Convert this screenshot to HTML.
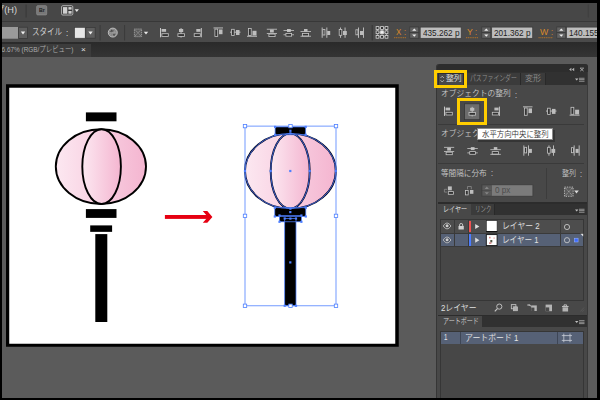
<!DOCTYPE html>
<html lang="ja">
<head>
<meta charset="utf-8">
<title>Illustrator - 整列パネル</title>
<style>
*{margin:0;padding:0;box-sizing:border-box;}
html,body{width:600px;height:400px;overflow:hidden;background:#000;}
body{position:relative;font-family:"Liberation Sans","Noto Sans CJK JP",sans-serif;font-size:9px;color:#d0d0d0;line-height:1;}
.a{position:absolute;}
.t{position:absolute;white-space:pre;line-height:1;transform-origin:0 0;font-weight:350;}
#menubar{left:2px;top:2.7px;width:595px;height:18.3px;background:#474747;}
#menuline{left:2px;top:20.7px;width:595px;height:1px;background:#383838;}
#ctrlbar{left:2px;top:21.7px;width:595px;height:20.3px;background:#4a4a4a;}
#tabband{left:2px;top:42px;width:595px;height:15px;background:linear-gradient(#2a2a2a,#343434);}
#doctab{left:2px;top:44.2px;width:88.5px;height:12.8px;background:#3c3c3c;}
#canvas{left:2px;top:57px;width:595px;height:341px;background:#5b5b5b;}
#artboard{left:6px;top:84.3px;width:392.6px;height:262.2px;background:#fff;border:3.3px solid #000;}
svg{position:absolute;left:0;top:0;overflow:visible;}
.vsep{position:absolute;width:1px;background:#383838;}
.fld{position:absolute;background:#c2c2c2;border:1px solid #3a3a3a;border-radius:1px;}
.spin{position:absolute;background:#606060;border:1px solid #3a3a3a;}
.dd{position:absolute;background:#606060;border:1px solid #3a3a3a;}
</style>
</head>
<body>
<div class="a" id="menubar"></div>
<div class="a" id="menuline"></div>
<div class="a" id="ctrlbar"></div>
<div class="a" id="tabband"></div>
<div class="a" id="doctab"></div>
<div class="a" id="canvas"></div>

<svg id="icons" width="600" height="400" viewBox="0 0 600 400" shape-rendering="auto">
<defs>
<g id="alignL"><rect x="0" y="0" width="1" height="9.3" fill="#c6c6c6"/><rect x="1.6" y="1" width="4.5" height="2.8" fill="#bdbdbd"/><rect x="1.9" y="5.7" width="6.4" height="2.7" fill="#333" stroke="#c6c6c6" stroke-width="0.8"/></g>
<g id="alignHC"><rect x="3.6" y="0" width="0.9" height="9.6" fill="#c6c6c6"/><rect x="2" y="1" width="4.2" height="3" fill="#bdbdbd"/><rect x="0.9" y="5.7" width="6.5" height="2.7" fill="#333" stroke="#c6c6c6" stroke-width="0.8"/></g>
<g id="alignR"><rect x="7.3" y="0" width="1" height="9.3" fill="#c6c6c6"/><rect x="2.8" y="1" width="4.2" height="2.8" fill="#bdbdbd"/><rect x="0.7" y="5.7" width="6.1" height="2.7" fill="#333" stroke="#c6c6c6" stroke-width="0.8"/></g>
<g id="alignT"><rect x="0" y="0" width="9.5" height="0.9" fill="#c6c6c6"/><rect x="1.4" y="1.6" width="2.8" height="7.3" fill="#333" stroke="#c6c6c6" stroke-width="0.8"/><rect x="5.5" y="2" width="3.5" height="4.7" fill="#bdbdbd"/></g>
<g id="alignVC"><rect x="0" y="4" width="10.5" height="0.9" fill="#c6c6c6"/><rect x="1.6" y="1.6" width="2.6" height="6.2" fill="#333" stroke="#c6c6c6" stroke-width="0.8"/><rect x="6" y="2.3" width="3.5" height="5" fill="#bdbdbd"/></g>
<g id="alignB"><rect x="0" y="8.3" width="10" height="0.9" fill="#c6c6c6"/><rect x="1.4" y="0.9" width="2.8" height="7" fill="#333" stroke="#c6c6c6" stroke-width="0.8"/><rect x="5.5" y="3.3" width="4" height="4.7" fill="#bdbdbd"/></g>
<g id="distT"><rect x="0" y="0.3" width="10.2" height="0.8" fill="#c6c6c6"/><rect x="3.2" y="1.1" width="3.8" height="2.9" fill="#bdbdbd"/><rect x="0" y="4.6" width="10.2" height="0.8" fill="#c6c6c6"/><rect x="2.1" y="5.6" width="6.2" height="2.5" fill="#333" stroke="#c6c6c6" stroke-width="0.8"/></g>
<g id="distVC"><rect x="3.5" y="0.5" width="3.8" height="3" fill="#bdbdbd"/><rect x="0" y="1.6" width="10.5" height="0.8" fill="#c6c6c6"/><rect x="0" y="5.9" width="10.5" height="0.8" fill="#c6c6c6"/><rect x="2.4" y="5" width="5.7" height="2.7" fill="#333" stroke="#c6c6c6" stroke-width="0.8"/></g>
<g id="distB"><rect x="3.5" y="0.5" width="3.5" height="2.6" fill="#bdbdbd"/><rect x="0" y="2.7" width="10.5" height="0.8" fill="#c6c6c6"/><rect x="1.9" y="5" width="6.2" height="2.5" fill="#333" stroke="#c6c6c6" stroke-width="0.8"/><rect x="0" y="7.3" width="10.5" height="0.8" fill="#c6c6c6"/></g>
<g id="distL"><rect x="0" y="0" width="0.9" height="10.3" fill="#c6c6c6"/><rect x="1.2" y="1.9" width="2" height="5.6" fill="#333" stroke="#c6c6c6" stroke-width="0.8"/><rect x="4.7" y="0" width="0.9" height="10.3" fill="#c6c6c6"/><rect x="5.5" y="3.5" width="3" height="4" fill="#bdbdbd"/></g>
<g id="distHC"><rect x="2.1" y="0" width="0.9" height="10.3" fill="#c6c6c6"/><rect x="1.2" y="1.9" width="2.6" height="5.9" fill="#333" stroke="#c6c6c6" stroke-width="0.8"/><rect x="6.6" y="0" width="0.9" height="10.3" fill="#c6c6c6"/><rect x="5" y="3.5" width="3.8" height="4" fill="#bdbdbd"/></g>
<g id="distR"><rect x="0.9" y="2.3" width="2" height="5" fill="#333" stroke="#c6c6c6" stroke-width="0.8"/><rect x="3.1" y="0" width="0.9" height="10.3" fill="#c6c6c6"/><rect x="5" y="3.5" width="3" height="4" fill="#bdbdbd"/><rect x="8.1" y="0" width="0.9" height="10.3" fill="#c6c6c6"/></g>
<g id="alignTo"><rect x="0.4" y="0.4" width="7.2" height="7.7" fill="#5c5c5c" stroke="#b8b8b8" stroke-width="0.8" stroke-dasharray="1.1 0.9"/><path d="M1.2 1.2l5.6 6.1M6.8 1.2l-5.6 6.1" stroke="#a8a8a8" stroke-width="0.8" stroke-dasharray="1 0.8" fill="none"/></g>
<g id="pmenu"><path d="M0 0.6h3.4l-1.7 2z" fill="#c0c0c0"/><rect x="4" y="0" width="5.5" height="0.8" fill="#a8a8a8"/><rect x="4" y="1.5" width="5.5" height="0.8" fill="#a8a8a8"/><rect x="4" y="3" width="5.5" height="0.8" fill="#a8a8a8"/></g>
</defs>

<!-- menu bar icons -->
<rect x="25.6" y="4.5" width="1" height="13" fill="#383838"/>
<rect x="36.7" y="5.7" width="10" height="9.2" rx="1" fill="#787878" stroke="#8c8c8c" stroke-width="0.8"/>
<rect x="61.6" y="5.7" width="11.2" height="9.3" rx="1.2" fill="#3a3a3a" stroke="#c0c0c0" stroke-width="0.9"/>
<rect x="63" y="7.1" width="4.3" height="6.6" fill="#cfcfcf"/>
<rect x="68.4" y="7.1" width="3.2" height="2.5" fill="#cfcfcf"/>
<rect x="68.4" y="11" width="3.2" height="2.7" fill="#cfcfcf"/>
<path d="M74.7 9.2h4.2l-2.1 2.8z" fill="#e8e8e8"/>
<rect x="587.8" y="4.5" width="0.8" height="13" fill="#3c3c3c"/>

<!-- control bar: left dropdown -->
<rect x="2" y="27" width="16.3" height="11.7" fill="#9a9a9a"/>
<rect x="18.6" y="27.2" width="8.8" height="11.3" fill="#5e5e5e" stroke="#3a3a3a" stroke-width="0.8"/>
<path d="M20.8 31.6h4.4l-2.2 2.8z" fill="#f0f0f0"/>
<!-- style swatch -->
<rect x="74.6" y="27.4" width="10.6" height="10.8" fill="#e6e6e6" stroke="#3a3a3a" stroke-width="0.6"/>
<rect x="85.8" y="27.4" width="9.4" height="10.8" fill="#5e5e5e" stroke="#3a3a3a" stroke-width="0.8"/>
<path d="M88.3 31.6h4.4l-2.2 2.8z" fill="#f0f0f0"/>
<rect x="99.6" y="25" width="1" height="15.5" fill="#3a3a3a"/>
<!-- globe -->
<circle cx="112.8" cy="32.6" r="4.5" fill="#888" stroke="#cfcfcf" stroke-width="0.8"/>
<path d="M109.6 31.8l1.6-2 2.4 0.1-0.4 1.8-1.8 0.9zM112.6 34.3l2.4-0.8 0.6 1.2-1.8 1.4z" fill="#4c4c4c"/><path d="M108.5 32.6h8.6M112.8 28.2v8.8M109.6 29.6q3.2 3 0 6M116 29.6q-3.2 3 0 6" stroke="#b0b0b0" stroke-width="0.35" fill="none"/>
<rect x="124.1" y="25" width="1" height="15.5" fill="#3a3a3a"/>
<use href="#alignTo" x="134" y="28.6"/>
<path d="M143.8 31.8h4.4l-2.2 2.6z" fill="#e8e8e8"/>
<!-- align icons -->
<use href="#alignL" x="160" y="28"/>
<use href="#alignHC" x="177" y="28"/>
<use href="#alignR" x="193.5" y="28"/>
<use href="#alignT" x="213.5" y="27.5"/>
<use href="#alignVC" x="230" y="27.7"/>
<use href="#alignB" x="247" y="27.5"/>
<use href="#distT" x="266.8" y="28.5"/>
<use href="#distVC" x="283.5" y="28.5"/>
<use href="#distB" x="300.5" y="28.5"/>
<use href="#distL" x="321.7" y="27.5"/>
<use href="#distHC" x="338" y="27.5"/>
<use href="#distR" x="355" y="27.5"/>
<rect x="371.7" y="25" width="1" height="15.5" fill="#353535"/>
<!-- reference point icon -->
<g fill="#333" stroke="#d8d8d8" stroke-width="0.8">
<path d="M377.5 28v8.8M382 28v8.8M386.5 28v8.8M377.5 28h9M377.5 32.3h9M377.5 36.8h9" fill="none" stroke="#bdbdbd" stroke-width="0.7"/>
<rect x="376.1" y="26.6" width="2.8" height="2.8"/><rect x="380.6" y="26.6" width="2.8" height="2.8"/><rect x="385.1" y="26.6" width="2.8" height="2.8"/>
<rect x="376.1" y="30.9" width="2.8" height="2.8"/><rect x="380.6" y="30.9" width="2.8" height="2.8" fill="#f0f0f0"/><rect x="385.1" y="30.9" width="2.8" height="2.8"/>
<rect x="376.1" y="35.4" width="2.8" height="2.8"/><rect x="380.6" y="35.4" width="2.8" height="2.8"/><rect x="385.1" y="35.4" width="2.8" height="2.8"/>
</g>
<!-- X field -->
<g>
<path d="M394 37.7h12" stroke="#c87a1e" stroke-width="0.8" stroke-dasharray="1.2 0.6"/>
<rect x="409.8" y="27" width="9" height="5.4" fill="#626262" stroke="#383838" stroke-width="0.7"/>
<rect x="409.8" y="32.8" width="9" height="5.4" fill="#626262" stroke="#383838" stroke-width="0.7"/>
<path d="M412.2 30.8h4.2l-2.1-2.4zM412.2 34.4h4.2l-2.1 2.4z" fill="#f0f0f0"/>
<rect x="420.2" y="27.1" width="41" height="11.2" fill="#bdbdbd" stroke="#3a3a3a" stroke-width="0.7"/>
</g>
<!-- Y field -->
<g>
<path d="M466 37.7h12" stroke="#c87a1e" stroke-width="0.8" stroke-dasharray="1.2 0.6"/>
<rect x="481.8" y="27" width="9" height="5.4" fill="#626262" stroke="#383838" stroke-width="0.7"/>
<rect x="481.8" y="32.8" width="9" height="5.4" fill="#626262" stroke="#383838" stroke-width="0.7"/>
<path d="M484.2 30.8h4.2l-2.1-2.4zM484.2 34.4h4.2l-2.1 2.4z" fill="#f0f0f0"/>
<rect x="491.7" y="27.1" width="41" height="11.2" fill="#bdbdbd" stroke="#3a3a3a" stroke-width="0.7"/>
</g>
<!-- W field -->
<g>
<path d="M538.5 37.7h14.5" stroke="#c87a1e" stroke-width="0.8" stroke-dasharray="1.2 0.6"/>
<rect x="556.8" y="27" width="9" height="5.4" fill="#626262" stroke="#383838" stroke-width="0.7"/>
<rect x="556.8" y="32.8" width="9" height="5.4" fill="#626262" stroke="#383838" stroke-width="0.7"/>
<path d="M559.2 30.8h4.2l-2.1-2.4zM559.2 34.4h4.2l-2.1 2.4z" fill="#f0f0f0"/>
<rect x="566.5" y="27.1" width="34" height="11.2" fill="#bdbdbd" stroke="#3a3a3a" stroke-width="0.7"/>
</g>
</svg>
<span class="t" style="left:-5.00px;top:5.35px;font-size:9.6px;color:#d6d6d6;transform:scaleX(0.9598);">プ(H)</span>
<span class="t" style="left:39.20px;top:7.87px;font-size:5.6px;color:#1c1c1c;transform:scaleX(0.9327);font-weight:bold">Br</span>
<span class="t" style="left:32.20px;top:27.88px;font-size:9.0px;color:#dedede;transform:scaleX(0.8330);">スタイル</span>
<span class="t" style="left:65.80px;top:29.33px;font-size:9.0px;color:#dedede;transform:scaleX(0.8745);">:</span>
<span class="t" style="left:395.50px;top:28.46px;font-size:8.8px;color:#d9892a;transform:scaleX(0.9021);">X</span>
<span class="t" style="left:404.00px;top:28.46px;font-size:8.8px;color:#d9892a;transform:scaleX(0.8153);">:</span>
<span class="t" style="left:422.50px;top:28.87px;font-size:8.7px;color:#1e1e1e;transform:scaleX(0.9442);">435.262 p</span>
<span class="t" style="left:467.00px;top:28.46px;font-size:8.8px;color:#d9892a;transform:scaleX(0.9872);">Y</span>
<span class="t" style="left:475.20px;top:28.46px;font-size:8.8px;color:#d9892a;transform:scaleX(0.8153);">:</span>
<span class="t" style="left:494.00px;top:28.87px;font-size:8.7px;color:#1e1e1e;transform:scaleX(0.9442);">201.362 p</span>
<span class="t" style="left:539.50px;top:28.46px;font-size:8.8px;color:#d9892a;transform:scaleX(0.9985);">W</span>
<span class="t" style="left:550.50px;top:28.46px;font-size:8.8px;color:#d9892a;transform:scaleX(0.8153);">:</span>
<span class="t" style="left:569.00px;top:28.87px;font-size:8.7px;color:#1e1e1e;transform:scaleX(0.9442);">140.155 p</span>
<span class="t" style="left:-2.50px;top:46.21px;font-size:7.6px;color:#acacac;transform:scaleX(0.8439);">66.67% (RGB/プレビュー)</span>
<span class="t" style="left:80.60px;top:46.16px;font-size:8.0px;color:#e0e0e0;transform:scaleX(1.0274);">×</span>


<svg id="art" width="600" height="400" viewBox="0 0 600 400">
<defs>
<linearGradient id="gp" x1="0" y1="0" x2="1" y2="0">
<stop offset="0" stop-color="#fce8f1"/><stop offset="1" stop-color="#f4b5d0"/>
</linearGradient>
</defs>
<rect x="6" y="84.25" width="392.75" height="262.5" fill="#000"/><rect x="9.25" y="87.75" width="386" height="256" fill="#fff"/>
<!-- left lantern -->
<g>
<rect x="85.9" y="112.4" width="30.6" height="8.9" fill="#000"/>
<ellipse cx="100.9" cy="166.6" rx="45.1" ry="37.4" fill="url(#gp)" stroke="#000" stroke-width="1.9"/>
<ellipse cx="101.6" cy="166.6" rx="19.3" ry="37.4" fill="url(#gp)" stroke="#000" stroke-width="1.9"/>
<rect x="85.9" y="209.1" width="30.6" height="8.8" fill="#000"/>
<rect x="90.2" y="225.4" width="21.9" height="6.45" fill="#000"/>
<rect x="95.3" y="234.1" width="12" height="87.9" fill="#000"/>
</g>
<!-- arrow -->
<g fill="#e60012">
<rect x="164.9" y="215" width="44" height="3.9"/>
<path d="M202.8 211.1H207.3L212.4 216.95L207.3 222.8H202.8L207.9 216.95Z"/>
</g>
<!-- right lantern -->
<g>
<ellipse cx="290.4" cy="171" rx="45.4" ry="37.65" fill="url(#gp)" stroke="#00001c" stroke-width="1.9"/>
<ellipse cx="290.2" cy="171" rx="19.5" ry="37.65" fill="url(#gp)" stroke="#00001c" stroke-width="1.9"/>
<rect x="275.1" y="126.9" width="30.6" height="7.9" fill="#000"/>
<rect x="274.8" y="207.7" width="31" height="8.8" fill="#000"/>
<rect x="279.5" y="215.5" width="21.9" height="6.3" fill="#000"/>
<rect x="284.7" y="218.5" width="11.3" height="87.3" fill="#000"/>
</g>
<!-- selection overlay -->
<g fill="none" stroke="#4f80ff" stroke-width="0.75">
<rect x="245" y="126.1" width="91" height="179.7" stroke-width="0.8"/>
<rect x="275.1" y="126.9" width="30.6" height="7.9"/>
<ellipse cx="290.4" cy="171" rx="45.4" ry="37.65"/>
<ellipse cx="290.2" cy="171" rx="19.5" ry="37.65"/>
<rect x="274.8" y="207.7" width="31" height="8.8"/>
<rect x="279.5" y="215.5" width="21.9" height="6.3"/>
<rect x="284.7" y="218.5" width="11.3" height="87.3"/>
</g>
<g fill="#4f80ff">
<rect x="243.9" y="169.9" width="2.2" height="2.2"/><rect x="334.7" y="169.9" width="2.2" height="2.2"/><rect x="289.3" y="132.3" width="2.2" height="2.2"/><rect x="289.3" y="207.5" width="2.2" height="2.2"/><rect x="269.6" y="169.9" width="2.2" height="2.2"/><rect x="308.6" y="169.9" width="2.2" height="2.2"/><rect x="289.2" y="169.9" width="2.2" height="2.2"/><rect x="274.0" y="125.8" width="2.2" height="2.2"/><rect x="304.6" y="125.8" width="2.2" height="2.2"/><rect x="274.0" y="133.7" width="2.2" height="2.2"/><rect x="304.6" y="133.7" width="2.2" height="2.2"/><rect x="289.3" y="129.7" width="2.2" height="2.2"/><rect x="273.7" y="206.6" width="2.2" height="2.2"/><rect x="304.7" y="206.6" width="2.2" height="2.2"/><rect x="273.7" y="215.4" width="2.2" height="2.2"/><rect x="304.7" y="215.4" width="2.2" height="2.2"/><rect x="289.2" y="211.0" width="2.2" height="2.2"/><rect x="278.4" y="214.4" width="2.2" height="2.2"/><rect x="300.3" y="214.4" width="2.2" height="2.2"/><rect x="278.4" y="220.7" width="2.2" height="2.2"/><rect x="300.3" y="220.7" width="2.2" height="2.2"/><rect x="289.3" y="217.5" width="2.2" height="2.2"/><rect x="283.6" y="217.4" width="2.2" height="2.2"/><rect x="294.9" y="217.4" width="2.2" height="2.2"/><rect x="283.6" y="304.7" width="2.2" height="2.2"/><rect x="294.9" y="304.7" width="2.2" height="2.2"/><rect x="289.2" y="261.3" width="2.2" height="2.2"/></g>
<g fill="#fff" stroke="#4f80ff" stroke-width="0.8">
<rect x="243.3" y="124.4" width="3.4" height="3.4"/><rect x="288.8" y="124.4" width="3.4" height="3.4"/><rect x="334.3" y="124.4" width="3.4" height="3.4"/><rect x="243.3" y="214.2" width="3.4" height="3.4"/><rect x="334.3" y="214.2" width="3.4" height="3.4"/><rect x="243.3" y="304.1" width="3.4" height="3.4"/><rect x="288.8" y="304.1" width="3.4" height="3.4"/><rect x="334.3" y="304.1" width="3.4" height="3.4"/></g>
</svg>


<div class="a" style="left:436px;top:64px;width:152px;height:334px;background:#484848;border-left:1px solid #363636;border-right:1px solid #3a3a3a;border-radius:3px 3px 0 0;"></div>
<!-- header -->
<div class="a" style="left:437px;top:64.3px;width:150.5px;height:8px;background:#2d2d2d;border-radius:3px 3px 0 0;"></div>
<!-- align tab row -->
<div class="a" style="left:437.5px;top:72.3px;width:149.5px;height:12.5px;background:#313131;"></div>
<div class="a" style="left:437.5px;top:72.8px;width:26.5px;height:12.2px;background:#484848;border:1px solid #2a2a34;border-bottom:none;"></div>
<div class="a" style="left:464.6px;top:73px;width:56px;height:11.5px;background:#3b3b3b;border-right:1px solid #292929;"></div>
<div class="a" style="left:521.2px;top:73px;width:24.4px;height:11.5px;background:#3b3b3b;border-right:1px solid #292929;"></div>
<!-- section separators -->
<div class="a" style="left:438px;top:123.7px;width:145.5px;height:1px;background:#3a3a3a;"></div>
<div class="a" style="left:438px;top:162.9px;width:145.5px;height:1px;background:#3a3a3a;"></div>
<div class="a" style="left:545.7px;top:167.5px;width:1px;height:31px;background:#3c3c3c;"></div>
<!-- layers section -->
<div class="a" style="left:437.5px;top:202.2px;width:149.5px;height:1.4px;background:#2c2c2c;"></div>
<div class="a" style="left:437.5px;top:203.6px;width:149.5px;height:11.2px;background:#313131;"></div>
<div class="a" style="left:437.5px;top:203.6px;width:33px;height:11.6px;background:#484848;"></div>
<div class="a" style="left:470.8px;top:203.8px;width:24px;height:10.8px;background:#3b3b3b;border-right:1px solid #292929;"></div>
<div class="a" style="left:440.3px;top:219.2px;width:143.6px;height:82.2px;background:#474747;border:1px solid #363636;"></div>
<div class="a" style="left:441.2px;top:219.8px;width:142px;height:13.2px;background:#4d4d4d;"></div>
<div class="a" style="left:441.2px;top:233.6px;width:142px;height:12.4px;background:#566176;"></div>
<div class="a" style="left:441.2px;top:233px;width:142px;height:0.7px;background:#3a3a3a;"></div>
<div class="a" style="left:441.2px;top:246px;width:142px;height:0.7px;background:#3a3a3a;"></div>
<div class="a" style="left:454.2px;top:219.8px;width:0.8px;height:26.2px;background:#3a3a3a;"></div>
<div class="a" style="left:467.8px;top:219.8px;width:0.8px;height:26.2px;background:#3a3a3a;"></div>
<div class="a" style="left:560px;top:219.8px;width:0.8px;height:26.2px;background:#3a3a3a;"></div>
<div class="a" style="left:468.9px;top:220.7px;width:2.4px;height:11.6px;background:#f05252;"></div>
<div class="a" style="left:468.9px;top:234.3px;width:2.4px;height:11.5px;background:#4c7dff;"></div>
<!-- artboard section -->
<div class="a" style="left:437.5px;top:314.6px;width:149.5px;height:1.4px;background:#2c2c2c;"></div>
<div class="a" style="left:437.5px;top:316px;width:149.5px;height:11px;background:#313131;"></div>
<div class="a" style="left:437.5px;top:316px;width:44.3px;height:11.4px;background:#484848;"></div>
<div class="a" style="left:440.3px;top:331px;width:143.6px;height:70px;background:#474747;border:1px solid #363636;"></div>
<div class="a" style="left:441.2px;top:332px;width:142px;height:11.8px;background:#566176;"></div>
<div class="a" style="left:459.8px;top:332px;width:0.8px;height:11.8px;background:#3e4656;"></div>
<div class="a" style="left:557px;top:332px;width:0.8px;height:11.8px;background:#3e4656;"></div>

<svg id="picons" width="600" height="400" viewBox="0 0 600 400">
<!-- header icons -->
<path d="M571.4 67.8l-2.3 1.7 2.3 1.7zM574.2 67.8l-2.3 1.7 2.3 1.7z" fill="#b4b4b4"/>
<path d="M580.2 68.3l3.4 2.8M583.6 68.3l-3.4 2.8" stroke="#b4b4b4" stroke-width="0.8" fill="none"/>
<rect x="580" y="67.7" width="3.8" height="0.7" fill="#b4b4b4"/>
<!-- tab updown icon -->
<path d="M440.5 78l1.7-1.8 1.7 1.8M440.5 80.2l1.7 1.8 1.7-1.8" fill="none" stroke="#c4c4c4" stroke-width="0.8"/>
<use href="#pmenu" x="575" y="77.8"/>
<use href="#pmenu" x="575" y="208.8"/>
<use href="#pmenu" x="575" y="320.3"/>
<!-- selected button -->
<rect x="464.6" y="103.8" width="15.2" height="15.9" fill="#6c6c6c" stroke="#333" stroke-width="0.7"/>
<!-- row 1 -->
<use href="#alignL" x="444" y="106.6"/>
<use href="#alignHC" x="468.1" y="106.8"/>
<use href="#alignR" x="491.6" y="106.6"/>
<use href="#alignT" x="523" y="106.4"/>
<use href="#alignVC" x="546" y="106.6"/>
<use href="#alignB" x="569.6" y="106.4"/>
<!-- row 2 -->
<use href="#distT" x="444" y="146.6"/>
<use href="#distVC" x="467.3" y="146.6"/>
<use href="#distB" x="490.3" y="146.6"/>
<use href="#distL" x="523.4" y="145.4"/>
<use href="#distHC" x="546.4" y="145.4"/>
<use href="#distR" x="570.6" y="145.4"/>
<!-- row 3 -->
<g>
<path d="M447 189.3h-2.6v2.8h2.6" fill="none" stroke="#8a8a8a" stroke-width="0.8"/>
<rect x="447.9" y="186.4" width="3.9" height="3.9" fill="#bdbdbd"/>
<rect x="448.3" y="191.6" width="5.1" height="2.7" fill="#333" stroke="#c6c6c6" stroke-width="0.8"/>
<path d="M467.5 189.3v-2.8h3.8v2.8" fill="none" stroke="#8a8a8a" stroke-width="0.8"/>
<rect x="465.4" y="190.4" width="2.8" height="4.5" fill="#333" stroke="#c6c6c6" stroke-width="0.8"/>
<rect x="470" y="190" width="3.4" height="3.8" fill="#bdbdbd"/>
</g>
<!-- spacing input -->
<rect x="481.9" y="184.8" width="51" height="11.4" fill="#7b7b7b" stroke="#3a3a3a" stroke-width="0.7"/>
<rect x="482.2" y="185.1" width="9.2" height="5.3" fill="#595959" stroke="#444" stroke-width="0.5"/>
<rect x="482.2" y="190.6" width="9.2" height="5.3" fill="#595959" stroke="#444" stroke-width="0.5"/>
<path d="M484.7 188.9h4.2l-2.1-2.4zM484.7 192.2h4.2l-2.1 2.4z" fill="#858585"/>
<!-- align to -->
<g transform="translate(564,186.6) scale(1.2)"><use href="#alignTo" x="0" y="0"/></g>
<path d="M574.2 190.6h4.6l-2.3 2.8z" fill="#dcdcdc"/>
<!-- layer rows icons -->
<g id="eye1">
<path d="M443.3 226c1.2-2 2.6-2.9 3.8-2.9s2.6 0.9 3.8 2.9c-1.2 1.9-2.6 2.8-3.8 2.8s-2.6-0.9-3.8-2.8z" fill="#484848" stroke="#cfcfcf" stroke-width="0.8"/>
<circle cx="447.1" cy="225.8" r="1.5" fill="#cfcfcf"/>
</g>
<g>
<path d="M443.3 240c1.2-2 2.6-2.9 3.8-2.9s2.6 0.9 3.8 2.9c-1.2 1.9-2.6 2.8-3.8 2.8s-2.6-0.9-3.8-2.8z" fill="#4a5262" stroke="#cfcfcf" stroke-width="0.8"/>
<circle cx="447.1" cy="239.8" r="1.5" fill="#cfcfcf"/>
</g>
<!-- lock -->
<path d="M459.6 226.2v-1.2a1.55 1.55 0 0 1 3.1 0v1.2" fill="none" stroke="#cfcfcf" stroke-width="0.9"/>
<rect x="458.5" y="226" width="5.3" height="3.5" fill="#cfcfcf"/>
<!-- triangles -->
<path d="M475.2 223.9l4.2 2.6-4.2 2.6z" fill="#dcdcdc"/>
<path d="M475.2 237.6l4.2 2.6-4.2 2.6z" fill="#dcdcdc"/>
<!-- thumbnails -->
<rect x="486.3" y="220.6" width="10.8" height="11.2" fill="#fff" stroke="#222" stroke-width="0.6"/>
<rect x="486.2" y="231" width="11.1" height="1.1" fill="#111"/>
<rect x="486.3" y="234.6" width="10.8" height="11" fill="#fff" stroke="#111" stroke-width="0.9"/>
<rect x="489" y="236.8" width="1.6" height="1.6" fill="#d88"/><rect x="493.5" y="237.5" width="1.2" height="1.2" fill="#e99"/><rect x="490.3" y="240" width="2" height="2.4" fill="#554"/><rect x="489" y="242.5" width="2.4" height="1.2" fill="#c66"/>
<!-- target circles -->
<circle cx="567" cy="227" r="2.6" fill="none" stroke="#d0d0d0" stroke-width="0.8"/>
<circle cx="567" cy="240.2" r="2.6" fill="none" stroke="#d0d0d0" stroke-width="0.8"/>
<rect x="574.3" y="238.2" width="3.8" height="3.8" fill="#3d6bff" stroke="#9db8ff" stroke-width="0.5"/>
<path d="M580.5 233.8h2.7v2.7z" fill="#e8e8e8"/>
<!-- layer panel bottom icons -->
<circle cx="499.3" cy="306.6" r="2.6" fill="none" stroke="#c8c8c8" stroke-width="0.9"/>
<path d="M497.4 308.6l-2.6 2.8" stroke="#c8c8c8" stroke-width="1.1"/>
<rect x="511.3" y="304.6" width="4.6" height="4.2" fill="#555" stroke="#c8c8c8" stroke-width="0.8"/>
<rect x="513.4" y="306.8" width="4.2" height="4" fill="#b0b0b0" stroke="#c8c8c8" stroke-width="0.6"/>
<path d="M527.3 305l3 0.2M529 304.4l2.3 2.3" stroke="#c8c8c8" stroke-width="1"/>
<rect x="531.2" y="305.4" width="5.6" height="5.6" fill="#b4b4b4"/>
<path d="M531.2 311v-3.4h3.2v3.4z" fill="#484848"/>
<rect x="545.6" y="304.6" width="6.4" height="6.6" fill="#b4b4b4"/>
<path d="M545.6 311.2v-3.8h3.6v3.8z" fill="#484848"/>
<path d="M562 306.5h6.6M564 306.3v-1.4h2.6v1.4" stroke="#c8c8c8" stroke-width="0.9" fill="none"/>
<rect x="562.5" y="307.3" width="5.6" height="4.2" fill="#b4b4b4"/>
<path d="M584 307.5l-3.6 4M584 309.7l-1.8 2" stroke="#5c5c5c" stroke-width="0.7"/>
<!-- artboard icon -->
<path d="M563.8 333.6v8.6M570 333.6v8.6M561.8 335.6h10.2M561.8 340.4h10.2" stroke="#c9ced8" stroke-width="0.8" fill="none"/>
</svg>

<!-- yellow highlight boxes -->
<div class="a" style="left:433.7px;top:69.8px;width:33.3px;height:18.1px;border:3px solid #ffcd00;"></div>
<div class="a" style="left:457.2px;top:97.9px;width:29.8px;height:26.9px;border:3px solid #ffcd00;"></div>


<span class="t" style="left:445.80px;top:75.17px;font-size:7.8px;color:#e0e0e0;transform:scaleX(1.0068);">整列</span>
<span class="t" style="left:469.60px;top:74.98px;font-size:7.8px;color:#8e8e8e;transform:scaleX(0.7503);">パスファインダー</span>
<span class="t" style="left:525.00px;top:75.17px;font-size:7.8px;color:#8e8e8e;transform:scaleX(1.0261);">変形</span>
<span class="t" style="left:441.30px;top:90.45px;font-size:8.1px;color:#c8c8c8;transform:scaleX(0.9566);">オブジェクトの整列</span>
<span class="t" style="left:514.80px;top:90.68px;font-size:8.6px;color:#c8c8c8;transform:scaleX(0.8366);">:</span>
<span class="t" style="left:441.30px;top:130.05px;font-size:8.1px;color:#c8c8c8;transform:scaleX(0.9566);">オブジェクトの分布</span>
<span class="t" style="left:441.30px;top:169.56px;font-size:8.1px;color:#c8c8c8;transform:scaleX(0.9408);">等間隔に分布</span>
<span class="t" style="left:490.80px;top:169.48px;font-size:8.6px;color:#c8c8c8;transform:scaleX(0.8366);">:</span>
<span class="t" style="left:561.80px;top:169.75px;font-size:8.2px;color:#c8c8c8;transform:scaleX(0.8541);">整列</span>
<span class="t" style="left:580.00px;top:170.08px;font-size:8.6px;color:#c8c8c8;transform:scaleX(0.8366);">:</span>
<span class="t" style="left:494.60px;top:186.46px;font-size:8.8px;color:#4c4c4c;transform:scaleX(0.9254);">0 px</span>
<span class="t" style="left:443.00px;top:205.56px;font-size:8.0px;color:#e0e0e0;transform:scaleX(0.7555);">レイヤー</span>
<span class="t" style="left:474.60px;top:205.96px;font-size:8.0px;color:#969696;transform:scaleX(0.6833);">リンク</span>
<span class="t" style="left:502.00px;top:221.58px;font-size:9.0px;color:#e0e0e0;transform:scaleX(0.8717);">レイヤー 2</span>
<span class="t" style="left:502.00px;top:236.08px;font-size:9.0px;color:#e0e0e0;transform:scaleX(0.8462);">レイヤー 1</span>
<span class="t" style="left:441.00px;top:303.51px;font-size:8.6px;color:#e0e0e0;transform:scaleX(0.9124);">2レイヤー</span>
<span class="t" style="left:442.80px;top:317.98px;font-size:7.8px;color:#d0d0d0;transform:scaleX(0.7749);">アートボード</span>
<span class="t" style="left:444.20px;top:333.06px;font-size:8.8px;color:#e6e6e6;transform:scaleX(0.6930);">1</span>
<span class="t" style="left:465.20px;top:333.50px;font-size:8.8px;color:#e6e6e6;transform:scaleX(0.8961);">アートボード 1</span>
<!-- tooltip -->
<div class="a" style="left:478px;top:129.6px;width:76.6px;height:12.2px;background:#2a2a2a;opacity:.6;"></div>
<div class="a" style="left:476.9px;top:128.3px;width:76.4px;height:12.2px;background:#fff;border:0.6px solid #8a8a8a;"></div>
<span class="t" style="left:482.30px;top:130.96px;font-size:8.1px;color:#333;transform:scaleX(0.9141);">水平方向中央に整列</span>


<!-- black frame -->
<div class="a" style="left:0;top:0;width:600px;height:2.7px;background:#000"></div>
<div class="a" style="left:0;top:397.6px;width:600px;height:3px;background:#000"></div>
<div class="a" style="left:0;top:0;width:2px;height:400px;background:#000"></div>
<div class="a" style="left:597px;top:0;width:3px;height:400px;background:#000"></div>
</body>
</html>
